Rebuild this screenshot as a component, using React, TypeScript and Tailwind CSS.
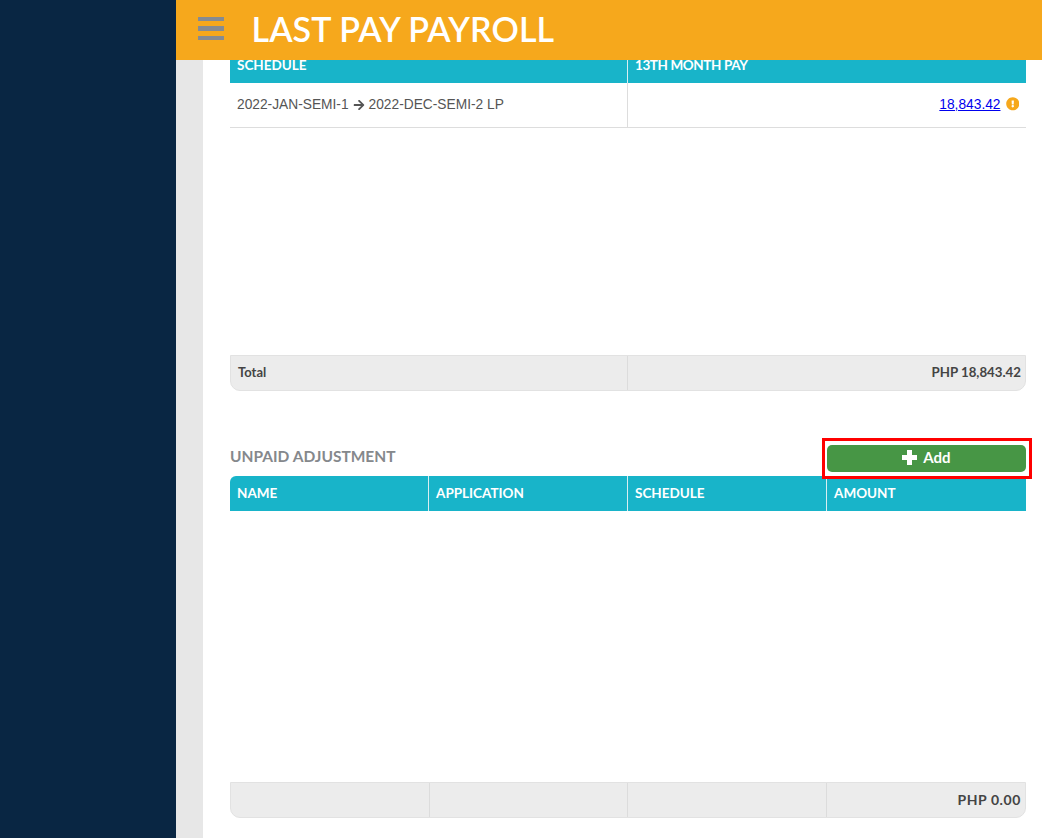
import { FaArrowRight, FaExclamationCircle } from "react-icons/fa";

const brand = "font-['Lato','Noto_Sans',sans-serif]";

function HeadCell({ label, last, tight }: { label: string; last?: boolean; tight?: boolean }): React.JSX.Element {
	return (
		<div
			className={`flex h-[35px] items-center px-[7px] pb-[1px] text-[13.5px] font-bold text-white ${last ? "" : "border-r border-[#d9eef2]"} ${tight ? "tracking-[-0.4px]" : ""}`}
		>
			{label}
		</div>
	);
}

function FootCell({ children, last }: { children?: React.ReactNode; last?: boolean }): React.JSX.Element {
	return (
		<div
			className={`flex items-center justify-end pr-[4px] text-[13.25px] font-bold text-[#444] ${last ? "" : "border-r border-[#dcdcdc]"}`}
		>
			{children}
		</div>
	);
}

export default function App(): React.JSX.Element {
	return (
		<div className="flex h-[838px] w-full overflow-hidden bg-white">
			<aside className="w-[176px] shrink-0 bg-[#092643]" />
			<div className={`flex min-w-0 flex-1 flex-col ${brand}`}>
				<header className="relative z-10 flex h-[60px] shrink-0 items-center bg-[#f6a81c] pl-[22px]">
					<div className="-mt-[3px] flex w-[26px] flex-col gap-[5px]">
						<span className="h-[4.5px] bg-[#868b91]" />
						<span className="h-[4.5px] bg-[#868b91]" />
						<span className="h-[4.5px] bg-[#868b91]" />
					</div>
					<h1 className="ml-[27.5px] pb-[4px] text-[34px] font-semibold tracking-[0.1px] text-white">LAST PAY PAYROLL</h1>
				</header>
				<div className="flex min-h-0 flex-1">
					<div className="w-[27px] shrink-0 bg-[#e7e7e7]" />
					<main className="-mt-[12px] min-w-0 flex-1 pl-[27px] pr-[16px]">
						<div className="grid grid-cols-[398px_1fr] bg-[#18b4c9]">
							<HeadCell label="SCHEDULE" />
							<HeadCell label="13TH MONTH PAY" last tight />
						</div>
						<div className="grid h-[45px] grid-cols-[398px_1fr] border-b border-[#dddddd] font-['Liberation_Sans',Arial,sans-serif] text-[13.75px] text-[#555]">
							<div className="flex items-center gap-[4px] border-r border-[#dddddd] px-[7px]">
								<span>2022-JAN-SEMI-1</span>
								<FaArrowRight className="text-[12px]" />
								<span>2022-DEC-SEMI-2 LP</span>
							</div>
							<div className="flex items-center justify-end gap-[5px] pr-[7px]">
								<a href="#" className="text-[#0000ee] underline">18,843.42</a>
								<FaExclamationCircle className="-mt-[2px] text-[13.5px] text-[#f6a81c]" />
							</div>
						</div>
						<div className="mt-[227px] grid h-[36px] grid-cols-[397px_1fr] rounded-b-[10px] border border-[#e2e2e2] bg-[#ececec]">
							<div className="flex items-center border-r border-[#dcdcdc] px-[7px] text-[13px] font-bold text-[#444]">Total</div>
							<FootCell last>PHP 18,843.42</FootCell>
						</div>
						<div className="mt-[54px] flex h-[27px] items-center justify-between">
							<h2 className="pb-[4px] text-[15.5px] font-bold text-[#85888c]">UNPAID ADJUSTMENT</h2>
							<button className="relative flex h-[27px] w-[199px] items-center justify-center gap-[6px] rounded-[5px] bg-[#479645] pb-[3px] text-[15px] font-bold text-white">
								<svg width="15" height="15" viewBox="0 0 15 15" fill="currentColor">
									<path d="M5 0h5v5h5v5h-5v5H5v-5H0V5h5z" />
								</svg>
								Add
								<span className="absolute -bottom-[7px] -left-[5px] -right-[6px] -top-[7px] border-[3px] border-[#ff0000]" />
							</button>
						</div>
						<div className="mt-[4px] grid grid-cols-[199px_199px_199px_1fr] rounded-tl-[6px] bg-[#18b4c9]">
							<HeadCell label="NAME" />
							<HeadCell label="APPLICATION" />
							<HeadCell label="SCHEDULE" />
							<HeadCell label="AMOUNT" last />
						</div>
						<div className="mt-[271px] grid h-[36px] grid-cols-[199px_198px_199px_1fr] rounded-b-[10px] border border-[#e2e2e2] bg-[#ececec]">
							<FootCell />
							<FootCell />
							<FootCell />
							<FootCell last>
								<span className="pb-[2px] text-[14px] tracking-[0.6px]">PHP 0.00</span>
							</FootCell>
						</div>
					</main>
				</div>
			</div>
		</div>
	);
}
